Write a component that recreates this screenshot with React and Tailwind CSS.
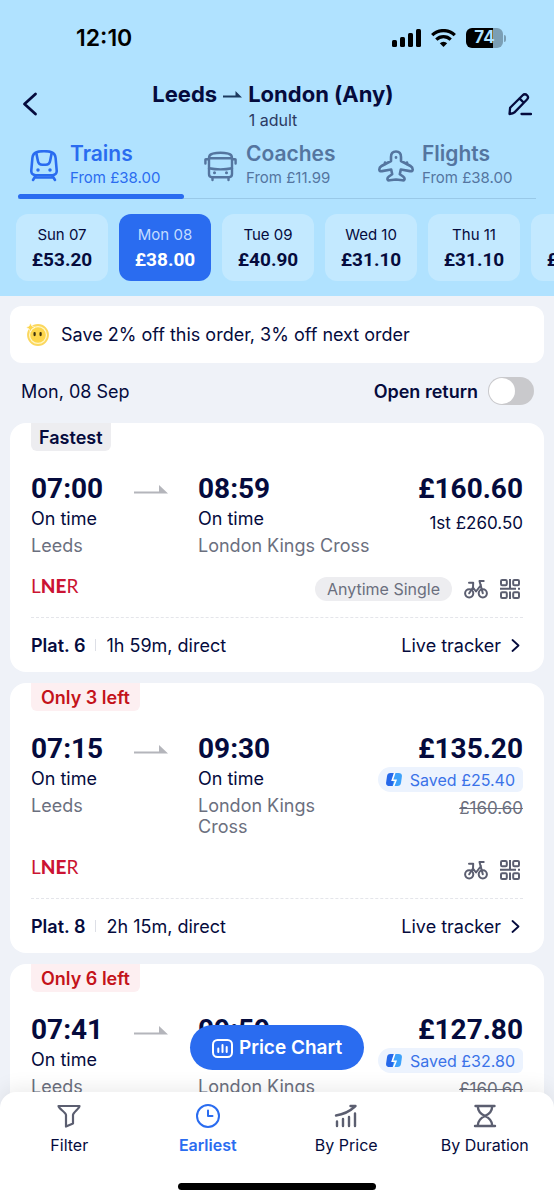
import { useState } from 'react';

const DATES = [
  { day: 'Sun 07', price: '£53.20' },
  { day: 'Mon 08', price: '£38.00' },
  { day: 'Tue 09', price: '£40.90' },
  { day: 'Wed 10', price: '£31.10' },
  { day: 'Thu 11', price: '£31.10' },
  { day: 'Fri 12', price: '£31.10' },
];

const JOURNEYS = [
  {
    tag: 'Fastest',
    departs: '07:00',
    arrives: '08:59',
    from: 'Leeds',
    to: 'London Kings Cross',
    price: '£160.60',
    firstClass: '1st £260.50',
    ticket: 'Anytime Single',
    platform: 'Plat. 6',
    duration: '1h 59m, direct',
  },
  {
    tag: 'Only 3 left',
    urgent: true,
    departs: '07:15',
    arrives: '09:30',
    from: 'Leeds',
    to: 'London Kings Cross',
    price: '£135.20',
    saved: 'Saved £25.40',
    oldPrice: '£160.60',
    platform: 'Plat. 8',
    duration: '2h 15m, direct',
  },
  {
    tag: 'Only 6 left',
    urgent: true,
    departs: '07:41',
    arrives: '09:59',
    from: 'Leeds',
    to: 'London Kings Cross',
    price: '£127.80',
    saved: 'Saved £32.80',
    oldPrice: '£160.60',
    platform: 'Plat. 5',
    duration: '2h 18m, direct',
  },
];

function StatusBar() {
  return (
    <div className="flex h-19 items-center justify-between pl-[76px] pr-12 text-black">
      <span className="text-[23px] font-semibold">12:10</span>
      <div className="flex items-center gap-[10px]">
        <svg width="29" height="18" viewBox="0 0 29 18" fill="currentColor">
          <rect x="0" y="11" width="5" height="7" rx="1.5" />
          <rect x="8" y="8" width="5" height="10" rx="1.5" />
          <rect x="16" y="4" width="5" height="14" rx="1.5" />
          <rect x="24" y="0" width="5" height="18" rx="1.5" />
        </svg>
        <svg width="25" height="18" viewBox="0 0 25 18" fill="none" stroke="currentColor" strokeWidth="3.2">
          <path d="M1.2 6.2a16 16 0 0 1 22.6 0" />
          <path d="M5.3 10.6a10.2 10.2 0 0 1 14.4 0" />
          <path d="M12.5 18l-3.7-3.8a5.3 5.3 0 0 1 7.4 0z" fill="currentColor" stroke="none" />
        </svg>
        <div className="flex items-center gap-px">
          <div className="flex h-5 w-[37px] items-center justify-center rounded-md bg-linear-to-r from-black from-74% to-[#7b9fb5] to-74% text-[17px] font-bold text-[#b0e2ff]">
            74
          </div>
          <span className="h-[7px] w-[2px] rounded-r-full bg-[#7b9fb5]" />
        </div>
      </div>
    </div>
  );
}

function TrainIcon() {
  return (
    <svg width="28" height="32" viewBox="0 0 28 32" fill="none" stroke="currentColor" strokeWidth="2.6" strokeLinecap="round" strokeLinejoin="round">
      <path d="M6.500 2.200C10 .9 18 .9 21.500 2.200c3 1.200 3.800 2.400 4.100 5.800L26.700 20.500c.2 3-1.400 4.700-4.400 4.700H5.700c-3 0-4.600-1.700-4.400-4.700L2.400 8C2.700 4.600 3.500 3.400 6.500 2.200z" />
      <path d="M6.300 3l1.500 7.500c.5 3 2 4.300 4.500 4.300h3.400c2.500 0 4-1.300 4.500-4.300L21.700 3" />
      <path d="M5.500 26l-2.500 4M22.500 26l2.500 4M5 27.500h18" />
      <circle cx="8" cy="20" r="1" fill="currentColor" strokeWidth="1.500" />
      <circle cx="20" cy="20" r="1" fill="currentColor" strokeWidth="1.500" />
    </svg>
  );
}

function CoachIcon() {
  return (
    <svg width="33" height="32" viewBox="0 0 33 32" fill="none" stroke="currentColor" strokeWidth="2.400" strokeLinecap="round" strokeLinejoin="round">
      <path d="M5 8c0-2.500 1-3.800 3.500-4.300 5-1.200 11-1.200 16 0C27 4.200 28 5.500 28 8v16c0 2-1 3.200-3 3.200H8c-2 0-3-1.200-3-3.200z" />
      <path d="M5 8.200h23M5 18.200c7 1.400 16 1.400 23 0M1.400 9.500v4M31.600 9.500v4M8.500 27.500v2.500M24.500 27.500v2.500M2 9.200h3M28 9.200h3" />
      <circle cx="10.500" cy="22.800" r=".8" fill="currentColor" strokeWidth="1.400" />
      <circle cx="22.500" cy="22.800" r=".8" fill="currentColor" strokeWidth="1.400" />
    </svg>
  );
}

function PlaneIcon() {
  return (
    <svg width="36" height="32" viewBox="0 0 36 32" fill="none" stroke="currentColor" strokeWidth="2.600" strokeLinecap="round" strokeLinejoin="round">
      <path d="M18 1.500c-3.500 0-5 2.600-5 5.500v4L3.500 16c-1.700.9-2.200 1.900-2.200 3.400 0 1.700 1 2 2.700 1.700l9.200-1.600 1 4.700-3.300 2.300c-1.300 1-1.600 2-1.400 2.900.2.900.9 1.100 2 .9l6.500-.8 6.500.8c1.100.2 1.800 0 2-.9.2-.9-.1-1.900-1.400-2.900l-3.300-2.300 1-4.700 9.200 1.600c1.700.3 2.700 0 2.700-1.700 0-1.500-.5-2.500-2.200-3.400L23 11V7c0-2.900-1.500-5.500-5-5.500z" />
      <path d="M7 12.500v1.500M29 12.500v1.500" />
      <circle cx="18" cy="7.500" r=".8" fill="currentColor" strokeWidth="1.200" />
    </svg>
  );
}

const TABS = [
  { name: 'Trains', from: 'From £38.00', Icon: TrainIcon },
  { name: 'Coaches', from: 'From £11.99', Icon: CoachIcon },
  { name: 'Flights', from: 'From £38.00', Icon: PlaneIcon },
];

function HalfArrow({ className, width }) {
  return (
    <svg className={className} width={width} viewBox="0 0 34 9" fill="currentColor">
      <path d="M0 6.500h25V0l9 8.500H0z" />
    </svg>
  );
}

function Header() {
  const [tab, setTab] = useState('Trains');
  const [date, setDate] = useState('Mon 08');

  return (
    <header className="shrink-0 bg-[#b0e2ff] pb-[15px]">
      <StatusBar />
      <div className="flex items-center justify-between px-[22px]">
        <button type="button" aria-label="Back">
          <svg width="16" height="24" viewBox="0 0 16 24" fill="none" stroke="currentColor" strokeWidth="2.800" strokeLinecap="round" strokeLinejoin="round">
            <path d="M13.500 2L2.500 12l11 10" />
          </svg>
        </button>
        <div className="pt-1 text-center">
          <h1 className="flex items-center gap-[6px] text-[22px] leading-7 font-bold">
            Leeds
            <svg width="19" height="7" viewBox="0 0 19 7" fill="currentColor" className="text-[#1d3a5f]">
              <path d="M0 4.500h12.500V0L19 6.500H0z" />
            </svg>
            London (Any)
          </h1>
          <p className="text-[16px] leading-6 text-[#2b3a63]">1 adult</p>
        </div>
        <button type="button" aria-label="Edit search">
          <svg width="24" height="24" viewBox="0 0 24 24" fill="none" stroke="currentColor" strokeWidth="2.300" strokeLinecap="round" strokeLinejoin="round">
            <path d="M1.500 22l.6-6.200L14.700 3.200c1.300-1.300 3-1.300 4.300 0s1.300 3 0 4.300L6.500 20.400c-1 1-2.800 1.500-5 1.600zM11.500 6.400l4.300 4.300M13.500 22H23" />
          </svg>
        </button>
      </div>

      <div className="mx-[18px] grid grid-cols-3 gap-[10px] bg-[linear-gradient(#99c9e8,#99c9e8)] bg-[length:100%_1px] bg-bottom bg-no-repeat pt-[10px]">
        {TABS.map(({ name, from, Icon }) => (
          <button
            key={name}
            type="button"
            onClick={() => setTab(name)}
            className={tab === name ? 'text-left text-[#2a6cf0]' : 'text-left text-[#54759f]'}
          >
            <span className="flex items-center gap-2 pl-2">
              <span className="flex w-9 shrink-0 justify-center">
                <Icon />
              </span>
              <span className="whitespace-nowrap">
                <span className="block text-[21px] leading-6 font-semibold">{name}</span>
                <span className="block text-[15px] leading-6">{from}</span>
              </span>
            </span>
            <span className={tab === name ? 'mt-1 block h-[5px] rounded-full bg-[#2a6cf0]' : 'mt-1 block h-[5px]'} />
          </button>
        ))}
      </div>

      <div className="mt-[15px] flex gap-[11px] overflow-hidden pl-4">
        {DATES.map(({ day, price }) => (
          <button
            key={day}
            type="button"
            onClick={() => setDate(day)}
            className={
              date === day
                ? 'h-[67px] w-[92px] shrink-0 rounded-xl bg-[#2a6cf0] text-white'
                : 'h-[67px] w-[92px] shrink-0 rounded-xl bg-[#c3e9ff]'
            }
          >
            <span className={date === day ? 'block text-[15px] leading-6 text-[#c3dcff]' : 'block text-[15px] leading-6'}>{day}</span>
            <span className="block font-[Roboto,sans-serif] text-[19px] leading-[26px] font-bold">{price}</span>
          </button>
        ))}
      </div>
    </header>
  );
}

function Banner() {
  return (
    <div className="flex h-[57px] items-center gap-3 rounded-xl bg-white px-4 text-[18px]">
      <svg width="23" height="23" viewBox="0 0 23 23">
        <circle cx="12" cy="12" r="10" fill="#fff6c4" stroke="#fbd75e" strokeWidth="1.800" />
        <circle cx="12" cy="12" r="7.800" fill="#fdd64b" />
        <path d="M4.500 0l1.400 3.100L9 4.500 5.900 5.900 4.500 9 3.100 5.900 0 4.500l3.100-1.400z" fill="#fdd64b" stroke="#fff" strokeWidth=".6" />
        <rect x="7.500" y="9" width="2.200" height="4.200" rx="1.100" fill="#3b3211" />
        <rect x="13.500" y="9" width="2.200" height="4.200" rx="1.100" fill="#3b3211" />
      </svg>
      <p>Save 2% off this order, 3% off next order</p>
    </div>
  );
}

function BikeIcon() {
  return (
    <svg width="24" height="20" viewBox="0 0 24 20" fill="none" stroke="currentColor" strokeWidth="2" strokeLinecap="round" strokeLinejoin="round">
      <circle cx="5.200" cy="14.300" r="4.100" />
      <circle cx="18.800" cy="14.300" r="4.100" />
      <path d="M5.200 14.300L9 8.500l3 4L17 6M5 3.800h4.200l-.2 4.700M18.800 14.300L15.500 2h4.200" />
    </svg>
  );
}

function QrIcon() {
  return (
    <svg width="20" height="20" viewBox="0 0 20 20" fill="none" stroke="currentColor" strokeWidth="2">
      <rect x="1" y="1" width="5.800" height="5.200" rx="1.200" />
      <rect x="13.200" y="1" width="5.800" height="5.200" rx="1.200" />
      <rect x="1" y="13.200" width="5.800" height="5.800" rx="1.200" />
      <rect x="13.200" y="13.200" width="5.800" height="5.800" rx="1.200" />
      <path d="M10 0v9.800M0 9.800h16M18 9.800h2M10 12.500V20" />
    </svg>
  );
}

function SavedIcon() {
  return (
    <svg width="16" height="13" viewBox="0 0 16 13">
      <path d="M4.500 0h5L7.500 13h-4C1 13-.2 11.700.1 9.500L1 3.200C1.300 1.100 2.500 0 4.500 0z" fill="#2568ea" />
      <path d="M8.500 0h4c2.500 0 3.700 1.300 3.400 3.500L15 9.800c-.3 2.100-1.500 3.200-3.500 3.200h-5z" fill="#3da2fb" />
      <path d="M8.800-.5L6.300 7.200h3.600L7.500 13.500" fill="none" stroke="#fff" strokeWidth="1.600" />
    </svg>
  );
}

function JourneyCard({ journey }) {
  return (
    <article className="rounded-2xl bg-white px-[21px]">
      <span
        className={
          journey.urgent
            ? 'inline-block h-7 rounded-b-md bg-[#fdeff1] px-[10px] align-top text-[18px] leading-[29px] font-semibold text-[#c4131a]'
            : 'inline-block h-7 rounded-b-md bg-[#ededf0] px-2 align-top text-[18px] leading-[29px] font-semibold'
        }
      >
        {journey.tag}
      </span>

      <div className="mt-[22px] flex">
        <div className="w-[103px] shrink-0">
          <p className="font-[Roboto,sans-serif] text-[28px] leading-8 font-bold">{journey.departs}</p>
          <p className="text-[18px] leading-7">On time</p>
          <p className="mt-0.5 text-[18px] leading-[21px] text-[#6b6f7e]">{journey.from}</p>
        </div>
        <HalfArrow width="34" className="mt-3 mr-[30px] h-[9px] shrink-0 text-[#b4b5bb]" />
        <div className="min-w-0 flex-1">
          <p className="font-[Roboto,sans-serif] text-[28px] leading-8 font-bold">{journey.arrives}</p>
          <p className="text-[18px] leading-7">On time</p>
          <p className="mt-0.5 text-[18px] leading-[21px] text-[#6b6f7e]">{journey.to}</p>
        </div>
        <div className="ml-4 flex shrink-0 flex-col items-end">
          <p className="font-[Roboto,sans-serif] text-[28px] leading-8 font-bold">{journey.price}</p>
          {journey.firstClass && <p className="mt-1.5 text-[17px] leading-6">{journey.firstClass}</p>}
          {journey.saved && (
            <>
              <p className="mt-0.5 flex h-[25px] items-center gap-2 rounded-l-[13px] rounded-r-md bg-[#ecf3fe] px-2 text-[16px] text-[#3a72e8]">
                <SavedIcon />
                {journey.saved}
              </p>
              <s className="mt-1.5 text-[17px] leading-5 text-[#6b6f7e]">{journey.oldPrice}</s>
            </>
          )}
        </div>
      </div>

      <div className="mt-[21px] flex h-6 items-start justify-between">
        <p aria-label="LNER" className="font-[Lato,sans-serif] text-[19px] leading-[18px] text-[#cb1433]">
          <span className="font-normal">L</span>
          <span className="font-black">NE</span>
          <span className="font-normal">R</span>
        </p>
        <div className="flex h-6 items-center gap-3 pr-[3px] text-[#5b5e70]">
          {journey.ticket && (
            <span className="rounded-full bg-[#ededf0] px-3 text-[16px] leading-6 text-[#6b6f7e]">{journey.ticket}</span>
          )}
          <BikeIcon />
          <QrIcon />
        </div>
      </div>

      <div className="mt-4 flex h-[55px] items-center border-t border-dashed border-[#e4e5ea] text-[18px]">
        <span className="font-semibold">{journey.platform}</span>
        <span className="mx-[10px] h-3 w-px bg-[#dddfe6]" />
        <span>{journey.duration}</span>
        <a href="#tracker" className="ml-auto flex items-center gap-[10px] pr-[3px]">
          Live tracker
          <svg width="9" height="13" viewBox="0 0 9 13" fill="none" stroke="currentColor" strokeWidth="1.800" strokeLinecap="round" strokeLinejoin="round">
            <path d="M1.500 1L7.500 6.500l-6 5.500" />
          </svg>
        </a>
      </div>
    </article>
  );
}

function FilterIcon() {
  return (
    <svg width="24" height="24" viewBox="0 0 24 24" fill="none" stroke="currentColor" strokeWidth="2.200" strokeLinecap="round" strokeLinejoin="round">
      <path d="M1.500 2h21c0 2.500-6.500 6.500-6.500 9v8.500L9 22.500V11C9 8.500 1.500 4.500 1.500 2z" />
    </svg>
  );
}

function ClockIcon() {
  return (
    <svg width="24" height="24" viewBox="0 0 24 24" fill="none" stroke="currentColor" strokeWidth="2" strokeLinecap="round" strokeLinejoin="round">
      <circle cx="12" cy="12" r="11" />
      <path d="M12 6.500V12h4.500" />
    </svg>
  );
}

function PriceIcon() {
  return (
    <svg width="24" height="24" viewBox="0 0 24 24" fill="none" stroke="currentColor" strokeWidth="2.400" strokeLinecap="round" strokeLinejoin="round">
      <path d="M3 17.500V22M9 15v7M15 13v9M21 9.500V22M2 11.500C9 10.500 15 8 21 2.500M16.500 2h5" />
    </svg>
  );
}

function HourglassIcon() {
  return (
    <svg width="24" height="24" viewBox="0 0 24 24" fill="none" stroke="currentColor" strokeWidth="2.400" strokeLinecap="round" strokeLinejoin="round">
      <path d="M2.500 2h19M2 22h20M4.800 2.500C5 7.500 7.500 9.500 12 12c-4.500 2-7 5-7.200 9.500M19.200 2.500C19 7.500 16.500 9.500 12 12c4.500 2 7 5 7.200 9.500" />
    </svg>
  );
}

const SORTS = [
  { name: 'Filter', Icon: FilterIcon },
  { name: 'Earliest', Icon: ClockIcon },
  { name: 'By Price', Icon: PriceIcon },
  { name: 'By Duration', Icon: HourglassIcon },
];

function BottomBar() {
  const [active, setActive] = useState('Earliest');

  return (
    <nav className="relative -mt-5 shrink-0 rounded-t-2xl bg-white pt-3 pb-[10px] shadow-[0_-4px_20px_rgba(0,0,0,0.08)]">
      <div className="absolute inset-x-0 bottom-full mb-[22px] flex justify-center">
        <button type="button" className="flex h-[45px] items-center gap-[6px] rounded-full bg-[#2a6cf0] px-[22px] pt-px text-[19px] font-semibold text-white">
          <svg width="21" height="19" viewBox="0 0 21 19" fill="none" stroke="currentColor" strokeWidth="2" strokeLinecap="round">
            <rect x="1" y="1" width="19" height="17" rx="4.500" />
            <path d="M6.300 9.500v3.500M10.500 6v7M14.700 8v5" />
          </svg>
          Price Chart
        </button>
      </div>
      <div className="grid grid-cols-4">
        {SORTS.map(({ name, Icon }) => (
          <button
            key={name}
            type="button"
            onClick={() => setActive(name)}
            className={active === name ? 'flex flex-col items-center gap-[5px] text-[#2a6cf0]' : 'flex flex-col items-center gap-[5px]'}
          >
            <span className={active === name ? '' : 'text-[#5b5e70]'}>
              <Icon />
            </span>
            <span className={active === name ? 'text-[16px] leading-6 font-semibold' : 'text-[16px] leading-6'}>{name}</span>
          </button>
        ))}
      </div>
      <div className="mx-auto mt-[26px] h-[7px] w-[198px] rounded-full bg-black" />
    </nav>
  );
}

export default function App() {
  const [openReturn, setOpenReturn] = useState(false);

  return (
    <div className="flex h-screen flex-col overflow-hidden bg-[#eff2f8] font-[Inter,sans-serif] text-[#050b3d]">
      <Header />
      <main className="min-h-0 flex-1 overflow-y-auto px-[10px] pt-[10px] [scrollbar-width:none]">
        <Banner />
        <div className="flex h-[60px] items-center justify-between pr-[10px] pb-1 pl-[11px]">
          <h2 className="text-[18px]">Mon, 08 Sep</h2>
          <label className="flex items-center gap-[10px] text-[18px] font-semibold">
            Open return
            <input
              type="checkbox"
              role="switch"
              checked={openReturn}
              onChange={(e) => setOpenReturn(e.target.checked)}
              className="h-7 w-[46px] appearance-none rounded-full bg-[#c9c9cc] p-px before:block before:size-[26px] before:rounded-full before:bg-white checked:bg-[#2a6cf0] checked:before:translate-x-[18px]"
            />
          </label>
        </div>
        <div className="flex flex-col gap-[11px] pb-10">
          {JOURNEYS.map((journey) => (
            <JourneyCard key={journey.departs} journey={journey} />
          ))}
        </div>
      </main>
      <BottomBar />
    </div>
  );
}
